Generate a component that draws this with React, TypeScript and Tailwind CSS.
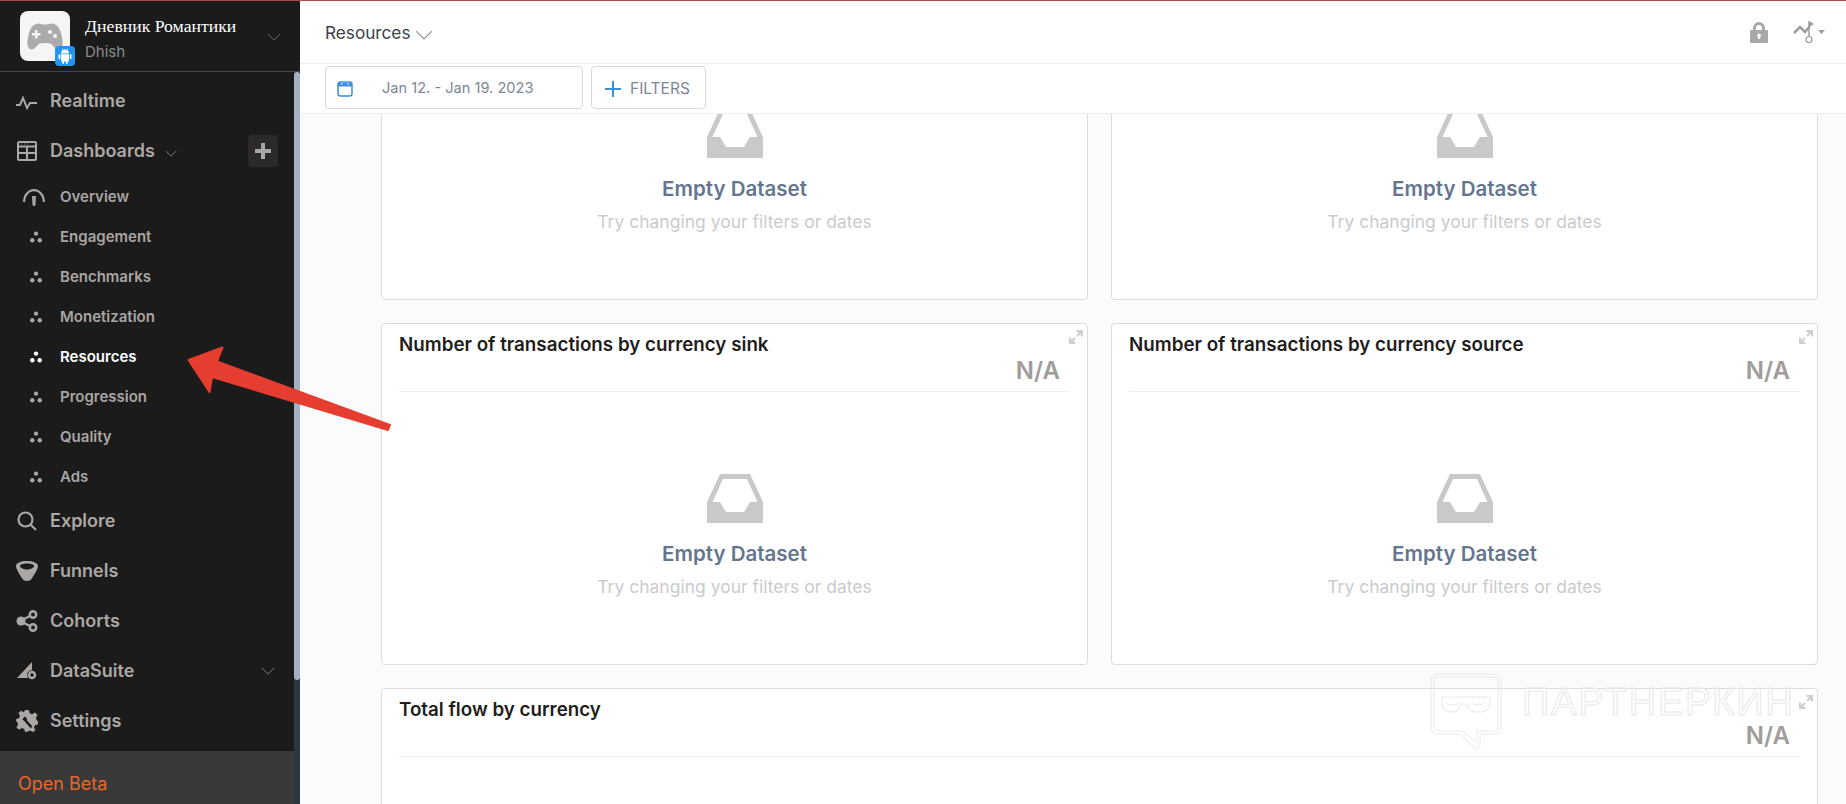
import React from "react";

const Chevron = ({ className }: { className: string }) => (
  <svg viewBox="0 0 16 9" fill="none" stroke="currentColor" strokeWidth="1" className={className}>
    <path d="M1 1l7 7 7-7" />
  </svg>
);

const DotsIcon = ({ active }: { active?: boolean }) => (
  <svg viewBox="0 0 12 12" className={`w-3 h-3 ${active ? "text-white" : "text-[#a9a5a2]"}`} fill="currentColor">
    <circle cx="6" cy="2.6" r="2.2" />
    <circle cx="2.3" cy="9.2" r="2.2" />
    <circle cx="9.7" cy="9.2" r="2.2" />
  </svg>
);

const InboxIcon = () => (
  <svg viewBox="0 0 56 49" className="w-14 h-[49px] text-[#c9c9c9]" fill="currentColor">
    <path fillRule="evenodd" d="M13 0h30l13 28v21H0V28zM16 5L5.500 28H13l6 10h18l6-10h7.500L40 5z" />
  </svg>
);

const ExpandIcon = () => (
  <svg viewBox="0 0 14 14" className="w-[14px] h-[14px] text-[#cfcfcf]" fill="none" stroke="currentColor" strokeWidth="2.200">
    <path d="M7.500 1.100h5.400v5.400M12.500 1.500L8 6M6.500 12.900H1.100V7.500M1.500 12.500L6 8" />
  </svg>
);

const MainItem = ({ icon, label, right }: { icon: React.ReactNode; label: string; right?: React.ReactNode }) => (
  <div className="h-[50px] flex items-center pl-4 pr-4 text-[#aba7a4]">
    <span className="w-[22px] h-[22px] flex items-center justify-center shrink-0">{icon}</span>
    <span className="ml-3 -mt-px text-[18px] font-semibold">{label}</span>
    {right}
  </div>
);

const SubItem = ({ icon, label, active }: { icon?: React.ReactNode; label: string; active?: boolean }) => (
  <div className={`h-10 pt-[2px] flex items-center ${active ? "text-white" : "text-[#a9a5a2]"}`}>
    <span className="w-[60px] flex justify-end pr-[18px] shrink-0">{icon || <DotsIcon active={active} />}</span>
    <span className="text-[15px] font-semibold">{label}</span>
  </div>
);

const Card = ({ title, na = true, empty = true, wide }: { title?: string; na?: boolean; empty?: boolean; wide?: boolean }) => (
  <div className={`relative h-[342px] bg-white border border-[#dcdcdc] rounded-[4px] px-[17px] ${wide ? "col-span-2" : ""}`}>
    <div className="absolute top-[6px] right-[4px]">
      <ExpandIcon />
    </div>
    <div className="h-[68px] border-b border-[#f0f0f0] relative">
      {title && <h3 className="pt-[8px] text-[18.800px] leading-[26px] font-semibold text-[#1f1d1c]">{title}</h3>}
      {na && <div className="absolute right-[10px] top-[32px] text-[24px] leading-[30px] font-semibold text-[#a09c99]">N/A</div>}
    </div>
    {empty && (
      <div className="flex flex-col items-center pt-[82px]">
        <InboxIcon />
        <div className="mt-[17px] text-[20.500px] leading-[28px] font-semibold text-[#64768f]">Empty Dataset</div>
        <div className="mt-[5px] text-[17.500px] leading-[28px] text-[#cbcbcb]">Try changing your filters or dates</div>
      </div>
    )}
  </div>
);

const App = () => {
  return (
    <div className="relative w-screen h-screen overflow-hidden flex flex-col bg-[#f9fbfd] font-['Inter',sans-serif]">
      <div className="h-px bg-[#b04c4c] shrink-0" />
      <div className="flex flex-1 min-h-0">
        {/* Sidebar */}
        <aside className="w-[300px] shrink-0 flex flex-col bg-[#1b1b1b]">
          <div className="h-[71px] shrink-0 border-b border-[#43454d] flex items-start pl-5 relative">
            <div className="relative mt-[10px] w-[50px] h-[50px] rounded-lg bg-[#f5f5f5] flex items-center justify-center">
              <svg viewBox="0 0 36 27" className="w-[36px] h-[27px] text-[#ababab]" fill="currentColor">
                <path
                  fillRule="evenodd"
                  d="M9 1c3-1.500 5 .5 9 .5S24-.5 27 1c4 1.500 6 5 7.500 11 1.500 6 2 12-1.500 14-3 1.500-6-1.500-8.500-5-2-1.500-11-1.500-13 0C9 24.500 6 27.500 3 26-.5 24 0 18 1.500 12 3 6 5 2.500 9 1zM8 7v3H5v2.500h3v3h2.500v-3h3V10h-3V7zm15 0a2 2 0 100 4 2 2 0 000-4zm5 4a2 2 0 100 4 2 2 0 000-4z"
                />
              </svg>
              <div className="absolute -right-[5px] -bottom-[5px] w-5 h-5 rounded bg-[#2196f3] flex items-center justify-center">
                <svg viewBox="0 0 14 16" className="w-[14px] h-4" fill="white">
                  <path d="M3 5.500a4 4 0 018 0z" />
                  <path d="M3 6.200h8v6.300a1 1 0 01-1 1H4a1 1 0 01-1-1z" />
                  <rect x="0.500" y="6.200" width="1.800" height="5" rx="0.900" />
                  <rect x="11.700" y="6.200" width="1.800" height="5" rx="0.900" />
                  <rect x="4.300" y="12.500" width="1.800" height="3.500" rx="0.900" />
                  <rect x="7.900" y="12.500" width="1.800" height="3.500" rx="0.900" />
                  <path d="M4.300.5l1.200 2M9.700.5l-1.200 2" stroke="white" strokeWidth="0.600" />
                </svg>
              </div>
            </div>
            <div className="ml-[15px]">
              <div className="mt-[13px] text-[17.700px] leading-[24px] text-white font-['Liberation_Serif',serif]">Дневник Романтики</div>
              <div className="mt-[3px] text-[15px] leading-[22px] text-[#8b8b8b]">Dhish</div>
            </div>
            <Chevron className="absolute left-[267px] top-[32px] w-[14px] h-2 text-[#77777a]" />
          </div>
          <div className="flex flex-1 min-h-0">
            <nav className="w-[294px] flex flex-col">
              <div className="flex-1 pt-[4px]">
                <MainItem
                  label="Realtime"
                  icon={
                    <svg viewBox="0 0 22 14" className="w-[22px] h-[14px] mt-[3px]" fill="none" stroke="currentColor" strokeWidth="2">
                      <path d="M0 9h4l3-7 4 10 3-5h7" />
                    </svg>
                  }
                />
                <MainItem
                  label="Dashboards"
                  icon={
                    <svg viewBox="0 0 20 20" className="w-5 h-5" fill="none" stroke="currentColor" strokeWidth="2">
                      <rect x="1" y="1" width="18" height="18" rx="1" />
                      <path d="M1 5.500h18M1 12h18M10 5.500V19" />
                      <path d="M4 3h.8M7 3h.8M10 3h.8" strokeWidth="1" />
                    </svg>
                  }
                  right={
                    <>
                      <Chevron className="ml-[10px] mt-1 w-3 h-[7px] text-[#999999]" />
                      <div className="ml-auto w-[30px] h-8 rounded bg-[#2b2929] flex items-center justify-center">
                        <svg viewBox="0 0 16 16" className="w-4 h-4" fill="currentColor">
                          <path d="M6 0h4v6h6v4h-6v6H6v-6H0V6h6z" />
                        </svg>
                      </div>
                    </>
                  }
                />
                <div>
                  <SubItem
                    label="Overview"
                    icon={
                      <svg viewBox="0 0 24 20" className="w-6 h-5 -mr-1" fill="currentColor">
                        <path d="M1 15C1 7.500 6 2 12 2s11 5.500 11 13h-2.200C20.800 9 17 4.200 12 4.200S3.200 9 3.200 15z" />
                        <path d="M10 9h4l-.5 8.500a1.500 1.500 0 01-3 0z" />
                      </svg>
                    }
                  />
                  <SubItem label="Engagement" />
                  <SubItem label="Benchmarks" />
                  <SubItem label="Monetization" />
                  <SubItem label="Resources" active />
                  <SubItem label="Progression" />
                  <SubItem label="Quality" />
                  <SubItem label="Ads" />
                </div>
                <MainItem
                  label="Explore"
                  icon={
                    <svg viewBox="0 0 20 20" className="w-5 h-5" fill="none" stroke="currentColor" strokeWidth="2.200">
                      <circle cx="8.500" cy="8.500" r="7" />
                      <path d="M13.500 13.500L19 19" />
                    </svg>
                  }
                />
                <MainItem
                  label="Funnels"
                  icon={
                    <svg viewBox="0 0 22 20" className="w-[22px] h-5" fill="currentColor">
                      <path
                        fillRule="evenodd"
                        d="M11 0c6 0 11 2 11 5 0 3-4 9-6.500 13-1.500 2.500-7.500 2.500-9 0C4 14 0 8 0 5c0-3 5-5 11-5zm0 2.500C7 2.500 4 3.500 4 5s3 3.500 7 3.500 7-2 7-3.500-3-2.500-7-2.500z"
                      />
                    </svg>
                  }
                />
                <MainItem
                  label="Cohorts"
                  icon={
                    <svg viewBox="0 0 22 22" className="w-[22px] h-[22px]" fill="none" stroke="currentColor" strokeWidth="2.500">
                      <circle cx="5" cy="11" r="4.500" fill="currentColor" stroke="none" />
                      <circle cx="17" cy="4.500" r="3.200" />
                      <circle cx="17" cy="17.500" r="3.200" />
                      <path d="M8 9l6-3M8 13l6 3" />
                    </svg>
                  }
                />
                <MainItem
                  label="DataSuite"
                  icon={
                    <svg viewBox="0 0 20 18" className="w-5 h-[18px]" fill="currentColor">
                      <path d="M0 16L15 0v8a5 5 0 00-4 8z" />
                      <circle cx="15" cy="13" r="3" fill="none" stroke="currentColor" strokeWidth="2.500" />
                    </svg>
                  }
                  right={<Chevron className="ml-auto mr-[3px] w-[14px] h-2 text-[#8a8a8a]" />}
                />
                <MainItem
                  label="Settings"
                  icon={
                    <svg viewBox="0 0 24 24" className="w-6 h-6" fill="currentColor">
                      <path
                        fillRule="evenodd"
                        d="M10 0h4l1 3.500 2.500 1 3.200-1.800 2.800 2.800-1.800 3.200 1 2.500L24 12.500v3l-3.300 1-1 2.500 1.600 3-2.800 2-3-1.700-2.500.8L12 24h-2l-1-3.300-2.500-1-3.200 1.800L.5 18.700l1.800-3.200-1-2.500L0 12V10l3.300-1 1-2.500L2.700 3.300 5.500.8l3 1.700zM9 7.500L7 10l3 3 6 7 2-2-6-6.500c.5-2-1-4.500-3-4z"
                      />
                    </svg>
                  }
                />
              </div>
              <div className="h-[53px] shrink-0 bg-[#393939] pl-[18px] pt-[20px] text-[18px] leading-[26px] text-[#e8662a]">Open Beta</div>
            </nav>
            <div className="w-[6px] bg-[#2c3542]">
              <div className="h-[608px] rounded-[3px] bg-[#a3b1c2]" />
            </div>
          </div>
        </aside>

        {/* Main */}
        <main className="flex-1 min-w-0 flex flex-col">
          <header className="h-[63px] shrink-0 bg-white border-b border-[#eeeeee] flex items-center pl-[25px] pr-[21px]">
            <span className="mt-[2px] text-[17.200px] text-[#3a4149]">Resources</span>
            <Chevron className="ml-[5px] mt-[5px] w-[18px] h-[10px] text-[#8f8f8f]" />
            <svg viewBox="0 0 18 21" className="ml-auto w-[18px] h-[21px] text-[#a9a9a9]" fill="currentColor">
              <path
                fillRule="evenodd"
                d="M3 8V6a6 6 0 0112 0v2h2a1 1 0 011 1v11a1 1 0 01-1 1H1a1 1 0 01-1-1V9a1 1 0 011-1zm3 0h6V6a3 3 0 00-6 0zm3 3.500a2 2 0 00-1 3.700V17h2v-1.800a2 2 0 00-1-3.700z"
              />
            </svg>
            <svg viewBox="0 0 32 22" className="ml-[25px] w-8 h-[22px] text-[#9d9d9d]" fill="none" stroke="currentColor">
              <path d="M1 12l6-6 5 5 5-6" strokeWidth="2.500" />
              <path d="M16 0v16" strokeWidth="1.500" />
              <path d="M16 0l5 3-5 3z" fill="currentColor" stroke="none" />
              <circle cx="16" cy="18.500" r="3" strokeWidth="1.200" />
              <path d="M25 9h7l-3.500 4z" fill="currentColor" stroke="none" />
            </svg>
          </header>
          <div className="h-[50px] shrink-0 bg-white border-b border-[#eeeeee] flex items-start gap-2 pl-[25px] pt-[2px]">
            <div className="w-[258px] h-[43px] border border-[#d9d9d9] rounded-[4px] flex items-center pl-[11px] pt-[3px]">
              <svg viewBox="0 0 16 16" className="w-4 h-4 text-[#3b8ee0]" fill="none" stroke="currentColor" strokeWidth="1.500">
                <rect x="1" y="1" width="14" height="14" rx="2.500" />
                <path d="M1 2h14v3.500H1z" fill="currentColor" stroke="none" />
                <path d="M4 3h1.500M10.500 3H12" stroke="white" strokeWidth="1.200" />
              </svg>
              <span className="ml-[29px] text-[14.600px] text-[#7d8794]">Jan 12. - Jan 19. 2023</span>
            </div>
            <div className="w-[115px] h-[43px] border border-[#d9d9d9] rounded-[4px] flex items-center pl-[13px] pt-[3px]">
              <svg viewBox="0 0 16 16" className="w-4 h-4 text-[#3b8ee0]" fill="currentColor">
                <path d="M7 0h2v7h7v2H9v7H7V9H0V7h7z" />
              </svg>
              <span className="ml-[9px] text-[15.500px] text-[#7d8794]">FILTERS</span>
            </div>
          </div>
          <div className="flex-1 min-h-0 overflow-hidden pl-[81px] pr-[28px]">
            <div className="-mt-[156px] grid grid-cols-2 gap-[23px]">
              <Card na={false} />
              <Card na={false} />
              <Card title="Number of transactions by currency sink" />
              <Card title="Number of transactions by currency source" />
              <Card title="Total flow by currency" empty={false} wide />
            </div>
          </div>
        </main>
      </div>

      {/* Annotation arrow */}
      <svg viewBox="0 0 1846 804" className="absolute inset-0 w-full h-full pointer-events-none">
        <path
          d="M188.500 360L222.500 347.500L217 361.500L390 425L388 430L212 377L209.500 392Z"
          fill="#e53e30"
          stroke="#e53e30"
          strokeWidth="2"
          strokeLinejoin="round"
        />
      </svg>

      {/* Watermark */}
      <svg viewBox="0 0 72 78" className="absolute left-[1430px] top-[673px] w-[72px] h-[78px] pointer-events-none" fill="none" stroke="#e8e8e8" strokeWidth="1">
        <path d="M7 1h58a6 6 0 016 6v48a6 6 0 01-6 6H50v12a3 3 0 01-5 2L30 61H7a6 6 0 01-6-6V7a6 6 0 016-6z" />
        <path d="M8 4h56a4 4 0 014 4v46a4 4 0 01-4 4H47v12L32 58H8a4 4 0 01-4-4V8a4 4 0 014-4z" />
        <path d="M12 24h48v6a9 9 0 01-9 9h-6a9 9 0 01-8-8h-6a9 9 0 01-8 8h-4a9 9 0 01-7-9z" />
        <path d="M17 30a7 4 0 0012 0M42 30a7 4 0 0012 0" />
      </svg>
      <div className="absolute left-[1522px] top-[680px] font-['Liberation_Sans',sans-serif] text-[38px] leading-[44px] tracking-[1.800px] text-transparent [-webkit-text-stroke:1px_#e8e8e8] pointer-events-none">
        ПАРТНЕРКИН
      </div>
    </div>
  );
};

export default App;
